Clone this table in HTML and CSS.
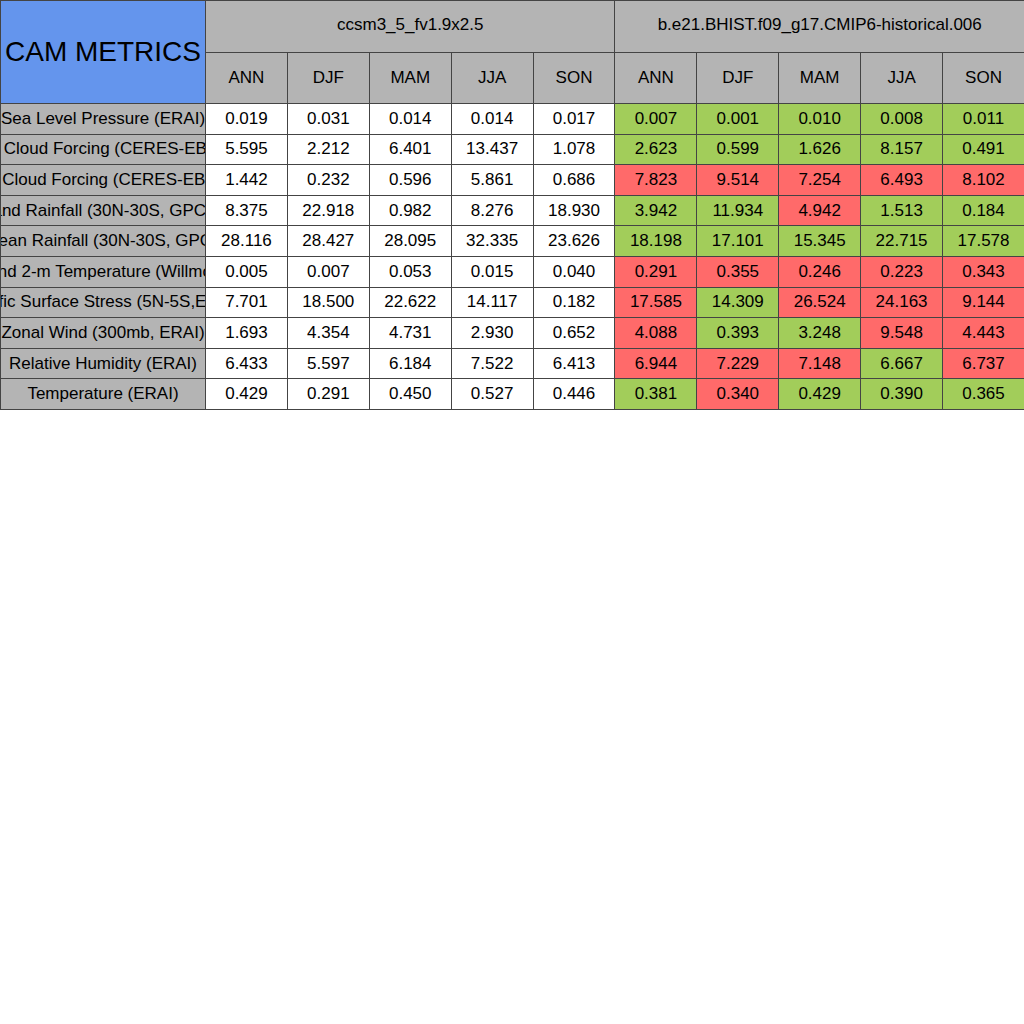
FILE: index.html
```html
<!DOCTYPE html>
<html>
<head>
<meta charset="utf-8">
<link rel="stylesheet" href="styles.css">
</head>
<body>
<table class="metrics">
  <colgroup>
    <col class="col-label">
    <col span="10">
  </colgroup>
  <thead>
    <tr class="hrow1">
      <th class="title" rowspan="2">CAM METRICS</th>
      <th class="case" colspan="5">ccsm3_5_fv1.9x2.5</th>
      <th class="case" colspan="5">b.e21.BHIST.f09_g17.CMIP6-historical.006</th>
    </tr>
    <tr class="hrow2">
      <th>ANN</th><th>DJF</th><th>MAM</th><th>JJA</th><th>SON</th>
      <th>ANN</th><th>DJF</th><th>MAM</th><th>JJA</th><th>SON</th>
    </tr>
  </thead>
  <tbody>
    <tr>
      <td class="label"><div class="clip">Sea Level Pressure (ERAI)</div></td>
      <td>0.019</td><td>0.031</td><td>0.014</td><td>0.014</td><td>0.017</td>
      <td class="good">0.007</td><td class="good">0.001</td><td class="good">0.010</td><td class="good">0.008</td><td class="good">0.011</td>
    </tr>
    <tr>
      <td class="label"><div class="clip">SW Cloud Forcing (CERES-EBAF)</div></td>
      <td>5.595</td><td>2.212</td><td>6.401</td><td>13.437</td><td>1.078</td>
      <td class="good">2.623</td><td class="good">0.599</td><td class="good">1.626</td><td class="good">8.157</td><td class="good">0.491</td>
    </tr>
    <tr>
      <td class="label"><div class="clip">LW Cloud Forcing (CERES-EBAF)</div></td>
      <td>1.442</td><td>0.232</td><td>0.596</td><td>5.861</td><td>0.686</td>
      <td class="bad">7.823</td><td class="bad">9.514</td><td class="bad">7.254</td><td class="bad">6.493</td><td class="bad">8.102</td>
    </tr>
    <tr>
      <td class="label"><div class="clip">Land Rainfall (30N-30S, GPCP)</div></td>
      <td>8.375</td><td>22.918</td><td>0.982</td><td>8.276</td><td>18.930</td>
      <td class="good">3.942</td><td class="good">11.934</td><td class="bad">4.942</td><td class="good">1.513</td><td class="good">0.184</td>
    </tr>
    <tr>
      <td class="label"><div class="clip">Ocean Rainfall (30N-30S, GPCP)</div></td>
      <td>28.116</td><td>28.427</td><td>28.095</td><td>32.335</td><td>23.626</td>
      <td class="good">18.198</td><td class="good">17.101</td><td class="good">15.345</td><td class="good">22.715</td><td class="good">17.578</td>
    </tr>
    <tr>
      <td class="label"><div class="clip">Land 2-m Temperature (Willmott)</div></td>
      <td>0.005</td><td>0.007</td><td>0.053</td><td>0.015</td><td>0.040</td>
      <td class="bad">0.291</td><td class="bad">0.355</td><td class="bad">0.246</td><td class="bad">0.223</td><td class="bad">0.343</td>
    </tr>
    <tr>
      <td class="label"><div class="clip">Pacific Surface Stress (5N-5S,ERAI)</div></td>
      <td>7.701</td><td>18.500</td><td>22.622</td><td>14.117</td><td>0.182</td>
      <td class="bad">17.585</td><td class="good">14.309</td><td class="bad">26.524</td><td class="bad">24.163</td><td class="bad">9.144</td>
    </tr>
    <tr>
      <td class="label"><div class="clip">Zonal Wind (300mb, ERAI)</div></td>
      <td>1.693</td><td>4.354</td><td>4.731</td><td>2.930</td><td>0.652</td>
      <td class="bad">4.088</td><td class="good">0.393</td><td class="good">3.248</td><td class="bad">9.548</td><td class="bad">4.443</td>
    </tr>
    <tr>
      <td class="label"><div class="clip">Relative Humidity (ERAI)</div></td>
      <td>6.433</td><td>5.597</td><td>6.184</td><td>7.522</td><td>6.413</td>
      <td class="bad">6.944</td><td class="bad">7.229</td><td class="bad">7.148</td><td class="good">6.667</td><td class="bad">6.737</td>
    </tr>
    <tr>
      <td class="label"><div class="clip">Temperature (ERAI)</div></td>
      <td>0.429</td><td>0.291</td><td>0.450</td><td>0.527</td><td>0.446</td>
      <td class="good">0.381</td><td class="bad">0.340</td><td class="good">0.429</td><td class="good">0.390</td><td class="good">0.365</td>
    </tr>
  </tbody>
</table>
</body>
</html>
```
FILE: styles.css
```css
html, body {
  margin: 0;
  padding: 0;
  background: #ffffff;
}

.metrics {
  width: 1025px;
  table-layout: fixed;
  border-collapse: collapse;
  font-family: "Liberation Sans", Arial, sans-serif;
  font-size: 17px;
  color: #000;
}

.col-label {
  width: 205px;
}

.metrics th,
.metrics td {
  border: 1px solid #444;
  padding: 0;
  text-align: center;
  vertical-align: middle;
  font-weight: normal;
  white-space: nowrap;
  overflow: hidden;
}

.metrics th {
  background: #b4b4b4;
}

.hrow1 {
  height: 52px;
}

.hrow2 {
  height: 51px;
}

.metrics tbody tr {
  height: 30.6px;
}

.metrics td {
  background: #ffffff;
}

.metrics th.title {
  background: #6495ed;
  font-size: 28px;
}

.metrics th.case {
  vertical-align: middle;
  padding-bottom: 4px;
}

.metrics td.label {
  background: #b4b4b4;
}

.clip {
  display: flex;
  justify-content: center;
  overflow: hidden;
  white-space: nowrap;
  width: 204px;
}

.metrics td.good {
  background: #a2cd5a;
}

.metrics td.bad {
  background: #ff6a6a;
}
```
